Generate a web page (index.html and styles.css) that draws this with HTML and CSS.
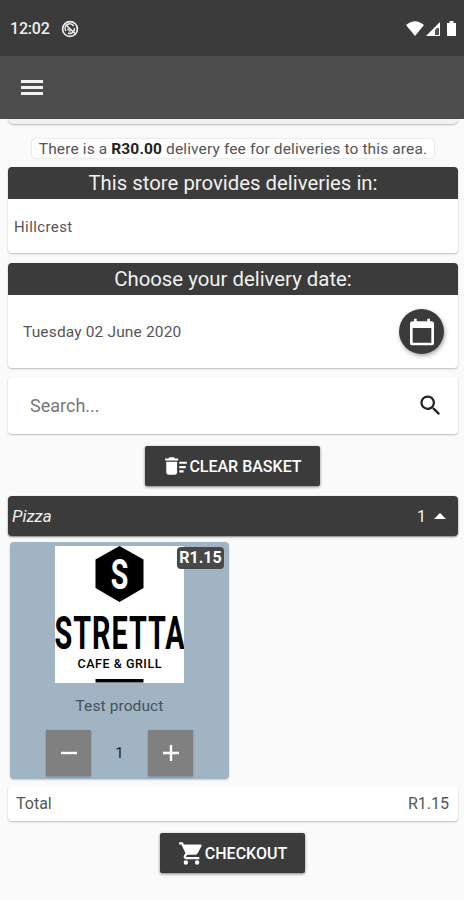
FILE: index.html
```html
<!DOCTYPE html>
<html lang="en">
<head>
<meta charset="UTF-8">
<meta name="viewport" content="width=device-width, initial-scale=1.0">
<title>Store</title>
<link rel="stylesheet" href="styles.css">
</head>
<body>
<div class="status-bar">
  <span class="clock">12:02</span>
  <svg class="status-app" width="18" height="18" viewBox="0 0 18 18">
    <circle cx="9" cy="9" r="7.4" fill="none" stroke="#eee" stroke-width="1.7"/>
    <path d="M4.800 11a4.600 4.600 0 0 1 7.800-5M13.400 8a4.600 4.600 0 0 1-6.400 5M4.500 4.500l9.500 9" fill="none" stroke="#eee" stroke-width="1.500"/>
    <path d="M6.500 8.500l3 3" stroke="#ccc" stroke-width="2"/>
  </svg>
  <svg class="status-icons" width="52" height="18" viewBox="0 0 52 18">
    <path d="M0 5Q9-2.600 18 5L9 16z" fill="#fff"/>
    <path d="M34 2v14H20z" fill="#fff"/>
    <path d="M31 8h2v7h-4v-5z" fill="#555"/>
    <path d="M41 3h2.500V1h4v2H50v13H41z" fill="#fff"/>
  </svg>
</div>
<header class="app-bar">
  <button class="menu-button" aria-label="Menu">
    <span></span><span></span><span></span>
  </button>
</header>

<main class="store">
  <div class="card card-tail"></div>

  <p class="notice">There is a <b>R30.00</b> delivery fee for deliveries to this area.</p>

  <section class="card areas">
    <h2>This store provides deliveries in:</h2>
    <div class="card-body">Hillcrest</div>
  </section>

  <section class="card delivery">
    <h2>Choose your delivery date:</h2>
    <div class="card-body">
      <span>Tuesday 02 June 2020</span>
      <button class="date-button" aria-label="Pick a date">
        <svg width="32" height="32" viewBox="0 0 24 24"><path fill="#fff" d="M19 4h-1V2h-2v2H8V2H6v2H5a2 2 0 0 0-2 2v14a2 2 0 0 0 2 2h14a2 2 0 0 0 2-2V6a2 2 0 0 0-2-2zm0 16H5V9h14z"/></svg>
      </button>
    </div>
  </section>

  <div class="card search">
    <span>Search...</span>
    <svg width="27" height="27" viewBox="0 0 24 24"><path fill="#222" d="M15.500 14h-.79l-.28-.27A6.470 6.470 0 0 0 16 9.500 6.500 6.500 0 1 0 9.500 16c1.610 0 3.090-.59 4.230-1.570l.27.28v.79l5 4.990L20.490 19zm-6 0a4.500 4.500 0 1 1 0-9 4.500 4.500 0 0 1 0 9z"/></svg>
  </div>

  <button class="action clear">
    <svg width="26" height="26" viewBox="0 0 24 24"><path fill="#fff" d="M15 16h4v2h-4zm0-8h7v2h-7zm0 4h6v2h-6zM3 18c0 1.100.9 2 2 2h6c1.100 0 2-.9 2-2V8H3zM14 5h-3l-1-1H6L5 5H2v2h12z"/></svg>
    <span>CLEAR BASKET</span>
  </button>

  <div class="category">
    <em>Pizza</em>
    <span class="count">1</span>
    <span class="arrow"></span>
  </div>

  <article class="product">
    <span class="price">R1.15</span>
    <svg class="logo" width="129" height="137" viewBox="0 0 129 137">
      <rect width="129" height="137" fill="#fff"/>
      <path d="M64.500 0L88.500 13.500V42L64.500 56 40.500 42V13.500z"/>
      <text class="logo-s" transform="translate(64.500 43) scale(.68 1)" text-anchor="middle">S</text>
      <text class="logo-name" transform="translate(-.5 103) scale(.62 1)" textLength="210" lengthAdjust="spacing">STRETTA</text>
      <text class="logo-sub" x="22.500" y="122" textLength="84" lengthAdjust="spacing">CAFE &amp; GRILL</text>
      <rect x="40.500" y="133" width="48" height="3.500"/>
    </svg>
    <div class="name">Test product</div>
    <div class="quantity">
      <button aria-label="Remove one"><svg width="18" height="18" viewBox="0 0 18 18"><path d="M1 9h16" stroke="#fff" stroke-width="2.400"/></svg></button>
      <span>1</span>
      <button aria-label="Add one"><svg width="18" height="18" viewBox="0 0 18 18"><path d="M1 9h16M9 1v16" stroke="#fff" stroke-width="2.400"/></svg></button>
    </div>
  </article>

  <div class="card total">
    <span>Total</span>
    <span>R1.15</span>
  </div>

  <button class="action checkout">
    <svg width="27" height="27" viewBox="0 0 24 24"><path fill="#fff" d="M7 18a2 2 0 1 0 0 4 2 2 0 0 0 0-4zM1 2v2h2l3.600 7.590-1.350 2.450C4.520 15.370 5.480 17 7 17h12v-2H7.420a.25.25 0 0 1-.22-.37L8.100 13h7.450c.75 0 1.410-.41 1.750-1.030l3.580-6.490A1 1 0 0 0 20 4H5.210l-.94-2zm16 16a2 2 0 1 0 0 4 2 2 0 0 0 0-4z"/></svg>
    <span>CHECKOUT</span>
  </button>
</main>
</body>
</html>
```
FILE: styles.css
```css
* {
  box-sizing: border-box;
}
body {
  margin: 0;
  height: 900px;
  overflow: hidden;
  background-color: #fafafa;
  font-family: Roboto, "Liberation Sans", sans-serif;
  font-size: 16px;
  color: #555;
}
button {
  border: none;
  padding: 0;
  font-family: inherit;
}
svg {
  display: block;
  flex: none;
}

/* Top bars */
.status-bar {
  display: flex;
  align-items: center;
  height: 56px;
  padding: 1px 6px 0 10px;
  background-color: #3b3b3b;
  color: #eee;
}
.clock {
  width: 51px;
  font-size: 16px;
  font-weight: 500;
  letter-spacing: -0.200px;
}
.status-icons {
  margin-left: auto;
}
.app-bar {
  display: flex;
  align-items: center;
  height: 63px;
  padding: 0 21px;
  background-color: #4d4d4d;
}
.menu-button {
  display: flex;
  flex-direction: column;
  gap: 3px;
  width: 22px;
  background: none;
}
.menu-button span {
  height: 3px;
  background-color: #f2f2f2;
}

/* Cards */
.store {
  display: flex;
  flex-direction: column;
  padding: 0 6px 0 8px;
}
.card {
  background-color: #fff;
  border-radius: 4px;
  box-shadow: 0 1px 2px rgba(0, 0, 0, 0.25);
}
.card-tail {
  height: 5px;
  border-radius: 0 0 5px 5px;
  background-color: #f1f1f1;
}
.notice {
  align-self: center;
  width: 402px;
  height: 19px;
  margin: 15px 0 9px;
  border-radius: 4px;
  background-color: #fff;
  box-shadow: 0 0 2px rgba(0, 0, 0, 0.2);
  font-size: 15.500px;
  line-height: 20px;
  text-align: center;
  white-space: nowrap;
  letter-spacing: 0.130px;
}
.notice b {
  color: #222;
}
h2 {
  margin: 0;
  height: 32px;
  border-radius: 4px 4px 0 0;
  background-color: #3b3b3b;
  color: #f0f0f0;
  font-size: 20.350px;
  font-weight: 400;
  line-height: 33px;
  text-align: center;
}
.areas {
  height: 86px;
}
.areas .card-body {
  padding: 18px 6px;
  line-height: 20px;
  font-size: 15px;
  letter-spacing: 0.400px;
}
.delivery {
  height: 105px;
  margin-top: 10px;
}
.delivery .card-body {
  display: flex;
  align-items: center;
  justify-content: space-between;
  height: 73px;
  padding: 0 14px 0 15px;
  font-size: 15.500px;
  letter-spacing: 0.150px;
}
.date-button {
  display: flex;
  align-items: center;
  justify-content: center;
  width: 45px;
  height: 45px;
  border-radius: 50%;
  background-color: #3b3b3b;
  box-shadow: 1px 2px 4px rgba(0, 0, 0, 0.35);
}
.search {
  display: flex;
  align-items: center;
  justify-content: space-between;
  height: 57px;
  margin-top: 9px;
  padding: 0 14px 0 22px;
  font-size: 18px;
  color: #777;
}

/* Buttons */
.action {
  display: flex;
  align-items: center;
  align-self: center;
  justify-content: center;
  height: 40px;
  margin-right: 1px;
  border-radius: 2px;
  background-color: #3b3b3b;
  box-shadow: 0 1px 3px rgba(0, 0, 0, 0.5);
  color: #fff;
  font-size: 16px;
  font-weight: 500;
}
.clear {
  width: 175px;
  margin-top: 12px;
}
.checkout {
  width: 145px;
  margin-top: 12px;
}

/* Products */
.category {
  display: flex;
  align-items: center;
  height: 40px;
  margin-top: 10px;
  padding: 0 12px 0 4px;
  border-radius: 4px;
  background-color: #3b3b3b;
  box-shadow: 0 1px 2px rgba(0, 0, 0, 0.5);
  color: #f0f0f0;
}
.category em {
  font-size: 17px;
}
.count {
  margin-left: auto;
}
.arrow {
  margin-left: 8px;
  border: 6px solid transparent;
  border-top: 0;
  border-bottom: 6px solid #fff;
}
.product {
  position: relative;
  display: flex;
  flex-direction: column;
  align-items: center;
  width: 219px;
  height: 237px;
  margin: 6px 0 0 2px;
  padding-top: 4px;
  border-radius: 4px;
  background-color: #a0b4c4;
  box-shadow: 0 1px 2px rgba(0, 0, 0, 0.2);
}
.price {
  position: absolute;
  top: 5px;
  right: 5px;
  width: 47px;
  height: 22px;
  border-radius: 4px;
  background-color: #484848;
  color: #fff;
  font-weight: 700;
  line-height: 22px;
  text-align: center;
}
.logo-s {
  fill: #fff;
  font-size: 42px;
  font-weight: 700;
}
.logo-name {
  font-size: 46.500px;
  font-weight: 700;
}
.logo-sub {
  font-size: 12.500px;
  font-weight: 500;
}
.name {
  margin-top: 13px;
  font-size: 15.500px;
  line-height: 20px;
  color: #45525c;
  letter-spacing: 0.100px;
}
.quantity {
  display: flex;
  align-items: center;
  justify-content: space-between;
  width: 147px;
  margin-top: 14px;
  color: #222;
  font-size: 15px;
}
.quantity button {
  display: flex;
  align-items: center;
  justify-content: center;
  width: 45px;
  height: 46px;
  background-color: #808080;
  box-shadow: 0 1px 2px rgba(0, 0, 0, 0.25);
}
.total {
  display: flex;
  align-items: center;
  justify-content: space-between;
  height: 35px;
  margin-top: 7px;
  padding: 0 9px 0 8px;
}
```
